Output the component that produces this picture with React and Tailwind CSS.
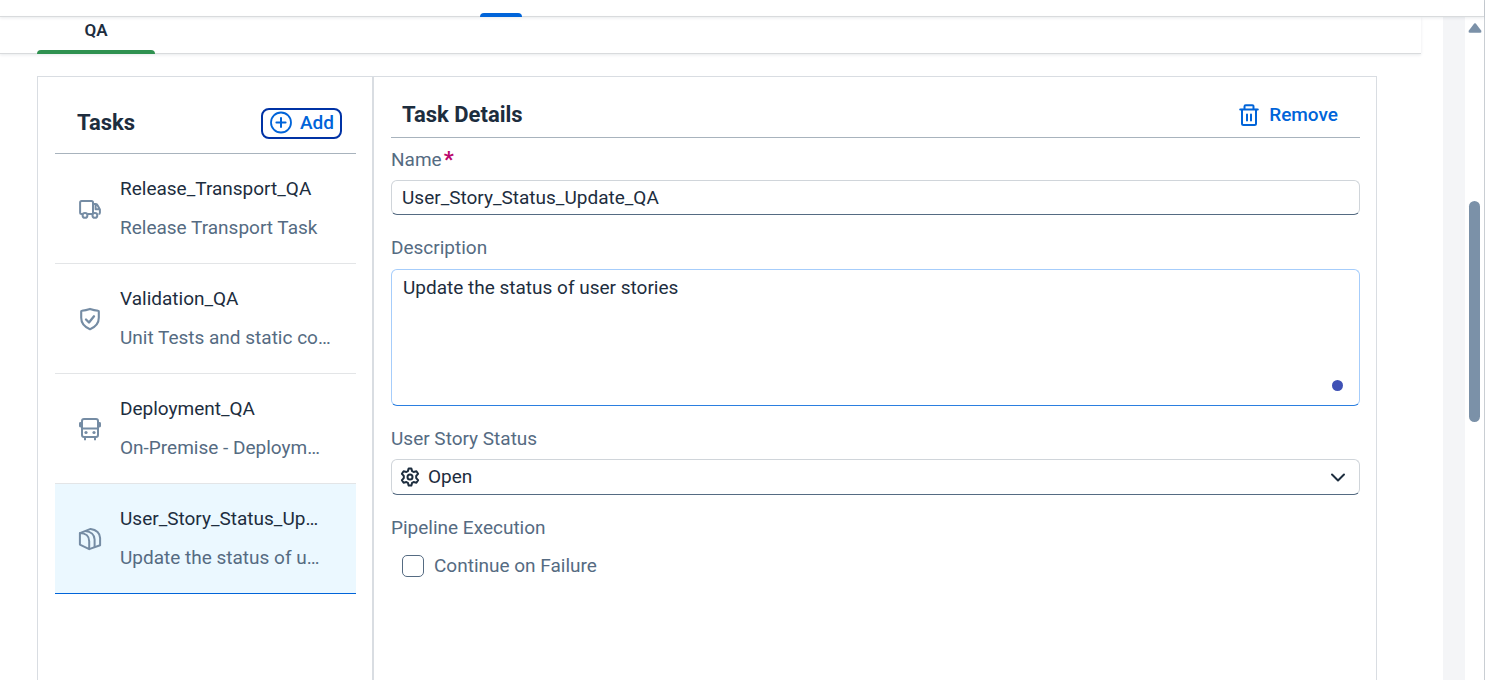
import React from "react";

const TruckIcon = () => (
  <svg width="24" height="24" viewBox="0 0 24 24" fill="none" stroke="currentColor" strokeWidth="2" strokeLinejoin="round" aria-hidden="true">
    <path d="M4.6 17.1H3.6a1.5 1.5 0 0 1-1.5-1.5V5.4a1.5 1.5 0 0 1 1.5-1.5h9.900a1.5 1.5 0 0 1 1.5 1.5v11.700" />
    <path d="M15 6.900h2.900a1.6 1.6 0 0 1 1.500 1l2.500 4.500v3.300a1.400 1.400 0 0 1-1.400 1.400M17.600 7v5.300h4.200M9.600 17.100h5.200" />
    <circle cx="7" cy="18.400" r="2.400" />
    <circle cx="16.900" cy="18.400" r="2.400" />
  </svg>
);

const ShieldIcon = () => (
  <svg width="24" height="24" viewBox="0 0 24 24" fill="none" stroke="currentColor" strokeWidth="2.100" strokeLinejoin="round" strokeLinecap="round" aria-hidden="true">
    <path d="M12 1.900c2.700.9 5.400 1.500 8.200 1.800.4 0 .6.4.6.8v6.300c0 5.300-3.300 9-8.300 11.200a1.300 1.300 0 0 1-1 0C6.500 19.800 3.200 16.100 3.200 10.800V4.500c0-.4.2-.8.6-.8 2.800-.3 5.500-.9 8.200-1.800Z" />
    <path d="m8 12.500 3 3 5-6.200" strokeWidth="2.300" />
  </svg>
);

const BusIcon = () => (
  <svg width="24" height="24" viewBox="0 0 24 24" fill="none" stroke="currentColor" strokeWidth="2" aria-hidden="true">
    <rect x="4" y="2" width="16" height="18" rx="2" />
    <path d="M4 11.500h16M7 20v3.200M17 20v3.200" />
    <path d="M2.400 6.400v2.600M21.600 6.400v2.600" strokeWidth="2.800" strokeLinecap="round" />
    <circle cx="8" cy="15.500" r="1.600" fill="currentColor" stroke="none" />
    <circle cx="16" cy="15.500" r="1.600" fill="currentColor" stroke="none" />
  </svg>
);

const PackageIcon = () => (
  <svg width="24" height="24" viewBox="0 0 24 24" fill="none" stroke="currentColor" strokeWidth="2" strokeLinejoin="round" aria-hidden="true">
    <path d="M1.900 6.100v11.500l9.300 4.500v-7.900c0-4.800-3.300-8.100-9.300-8.100Z" />
    <path d="M1.900 6.100 12.600 1.900c5.900.7 9.500 4.500 9.500 9.100v7.300l-10.900 3.800" />
    <path d="M7.100 4.100c6 .5 9.500 3.900 9.500 8.500v7.500" />
  </svg>
);

const AddIcon = () => (
  <svg width="24" height="24" viewBox="0 0 24 24" fill="none" stroke="currentColor" strokeWidth="1.800" strokeLinecap="round" aria-hidden="true">
    <circle cx="12" cy="11.500" r="10" />
    <path d="M12 6.900v9.200M7.400 11.500h9.200" strokeWidth="2" />
  </svg>
);

const TrashIcon = () => (
  <svg width="24" height="24" viewBox="0 0 24 24" fill="none" stroke="currentColor" strokeWidth="2" strokeLinecap="round" strokeLinejoin="round" aria-hidden="true">
    <path d="M3.200 6.500h17.600M7.500 6.200V3.400a1.200 1.200 0 0 1 1.200-1.200h6.600a1.200 1.200 0 0 1 1.200 1.200v2.800" />
    <path d="M5 6.800v13.700a1.500 1.500 0 0 0 1.500 1.500h11a1.500 1.500 0 0 0 1.500-1.500V6.800M10 11.500v6M14 11.500v6" />
  </svg>
);

const GearIcon = () => (
  <svg width="20" height="20" viewBox="0 0 20 20" fill="none" stroke="currentColor" strokeWidth="2" strokeLinejoin="round" aria-hidden="true">
    <path d="M8.700 1.400h2.600l.8 2.700 1.500.9 2.800-.7 1.700 2.500L16.200 8.900v2.200l1.900 2.100-1.700 2.500-2.800-.7-1.500.9-.8 2.700H8.700l-.8-2.700-1.500-.9-2.800.7-1.700-2.500 1.900-2.100V8.900L1.900 6.800l1.700-2.500 2.800.7 1.500-.9Z" />
    <circle cx="10" cy="10" r="2.500" />
  </svg>
);

const tasks = [
  { name: "Release_Transport_QA", description: "Release Transport Task", Icon: TruckIcon },
  { name: "Validation_QA", description: "Unit Tests and static co…", Icon: ShieldIcon },
  { name: "Deployment_QA", description: "On-Premise - Deploym…", Icon: BusIcon },
  { name: "User_Story_Status_Up…", description: "Update the status of u…", Icon: PackageIcon, selected: true },
];

function TaskList() {
  return (
    <aside className="w-[336px] shrink-0 border-r-2 border-[#d9dde2] pt-4 pr-4 pl-[17px]">
      <header className="flex h-[61px] items-center justify-between border-b border-[#a8b3bd] pr-[14px] pl-[22px]">
        <h2 className="text-[22px] leading-7 font-bold">Tasks</h2>
        <button type="button" className="flex h-[31px] items-center gap-[7px] rounded-lg border-2 border-[#0032a5] px-[6px] text-[19px] leading-6 font-medium text-[#0064d9]">
          <AddIcon />
          Add
        </button>
      </header>
      <ul>
        {tasks.map(({ name, description, Icon, selected }) => (
          <li key={name} className={selected ? "border-b border-[#0064d9] bg-[#ebf8ff]" : "border-b border-[#e3e5e7]"}>
            <button type="button" className="flex w-full items-center gap-[18px] py-[23px] pl-[23px] text-left">
              <span className="shrink-0 text-[#758ca4]"><Icon /></span>
              <span className="flex min-w-0 flex-col gap-[15px] text-[19px] leading-6 whitespace-nowrap">
                <span>{name}</span>
                <span className="text-[#556b82]">{description}</span>
              </span>
            </button>
          </li>
        ))}
      </ul>
    </aside>
  );
}

function TaskDetails() {
  return (
    <section className="min-w-0 flex-1 pt-4 pr-4 pl-[17px]">
      <header className="flex h-[45px] items-center justify-between border-b border-[#a8b3bd] pr-[22px] pl-[11px]">
        <h2 className="text-[22px] leading-7 font-bold">Task Details</h2>
        <button type="button" className="flex items-center gap-2 text-[19px] leading-6 font-medium text-[#0064d9]">
          <TrashIcon />
          Remove
        </button>
      </header>
      <form className="flex flex-col gap-[21px] pt-[10px] text-[19px] leading-6">
        <div className="flex flex-col gap-2">
          <label htmlFor="name" className="flex gap-[2px] text-[#556b82]">
            Name<span className="text-[22px] font-bold text-[#ba066c]">*</span>
          </label>
          <input id="name" type="text" defaultValue="User_Story_Status_Update_QA" className="h-[35px] w-full rounded-md border border-[#d0d5da] border-b-[#556b82] bg-white px-[10px] outline-none" />
        </div>
        <div className="flex flex-col gap-[9px]">
          <label htmlFor="description" className="text-[#556b82]">Description</label>
          <div className="relative flex">
            <textarea id="description" defaultValue="Update the status of user stories" className="h-[137px] w-full resize-none rounded-md border border-[#a6cdfb] border-b-[#2b7fe0] bg-white px-[11px] py-[6px] outline-none" />
            <span className="absolute right-[17px] bottom-[15px] size-[11px] rounded-full bg-[#3f51b5]" />
          </div>
        </div>
        <div className="flex flex-col gap-2">
          <label htmlFor="status" className="text-[#556b82]">User Story Status</label>
          <div className="relative flex items-center">
            <select id="status" defaultValue="Open" className="h-9 w-full appearance-none rounded-md border border-[#d0d5da] border-b-[#556b82] bg-white pr-12 pl-9 outline-none">
              <option>Open</option>
            </select>
            <span className="pointer-events-none absolute left-[9px]"><GearIcon /></span>
            <svg className="pointer-events-none absolute right-[14px]" width="16" height="16" viewBox="0 0 16 16" fill="none" stroke="currentColor" strokeWidth="2" strokeLinecap="round" strokeLinejoin="round" aria-hidden="true">
              <path d="m2 5.500 6 6 6-6" />
            </svg>
          </div>
        </div>
        <fieldset className="text-[#556b82]">
          <legend>Pipeline Execution</legend>
          <label className="flex items-center gap-[10px] pt-[14px] pl-[11px]">
            <input type="checkbox" className="size-[22px] appearance-none rounded-[5px] border border-[#556b82] bg-white checked:bg-[#0064d9]" />
            Continue on Failure
          </label>
        </fieldset>
      </form>
    </section>
  );
}

export default function App() {
  return (
    <div className="flex min-h-screen flex-col border-r border-[#c9ced3] bg-white font-[Roboto,sans-serif] text-[#1d2d3e]">
      <nav className="relative h-[17px] border-b border-[#d9dbdd] pt-[13px] pl-[480px] shadow-[0_1px_3px_rgba(34,53,72,0.1)]">
        <span className="block h-1 w-[42px] rounded-t-sm bg-[#0064d9]" />
      </nav>
      <div className="flex flex-1">
        <main className="flex min-w-0 flex-1 flex-col">
          <div className="mr-[22px] h-[37px] border-b border-[#d9dbdd] pl-[37px] shadow-[0_1px_3px_rgba(34,53,72,0.1)]">
            <a href="#qa" className="flex h-[37px] w-[118px] flex-col items-center justify-between pt-px text-[17px] leading-6 font-semibold">
              QA
              <span className="h-1 w-full rounded-t-sm bg-[#2f9150]" />
            </a>
          </div>
          <div className="mt-[22px] mr-[66px] ml-[37px] flex flex-1 border border-b-0 border-[#d9dde2]">
            <TaskList />
            <TaskDetails />
          </div>
        </main>
        <div className="w-[22px] shrink-0 bg-[#f4f5f7]" />
        <div className="flex w-[19px] shrink-0 flex-col items-center bg-white pt-1 text-[#7b91a8]">
          <svg width="14" height="14" viewBox="0 0 14 14" fill="currentColor" aria-hidden="true">
            <path d="M6.200 2.600a1.200 1.200 0 0 1 1.600 0l5.500 7.200q.6 1.800-1 1.900H1.700q-1.600-.1-1-1.900Z" />
          </svg>
          <div className="mt-[166px] h-[221px] w-[11px] rounded-full bg-[#7b91a8]" />
        </div>
      </div>
    </div>
  );
}
